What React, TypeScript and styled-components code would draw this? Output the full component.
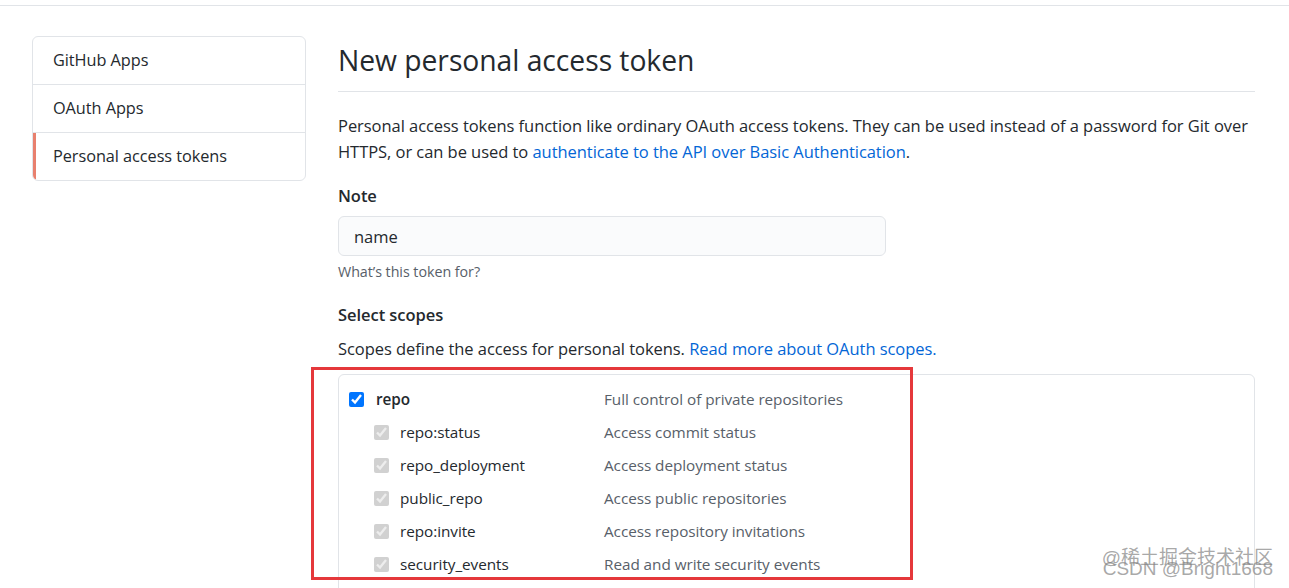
import React from "react";
import styled, { createGlobalStyle } from "styled-components";

const GlobalStyle = createGlobalStyle`
  html, body {
    margin: 0;
    padding: 0;
    background: #fff;
  }
  body {
    font-family: "Open Sans", "Noto Sans", "Liberation Sans", sans-serif;
    color: #24292e;
    font-size: 16.5px;
    letter-spacing: -0.05px;
    line-height: 1.5;
  }
`;

const Page = styled.div`
  position: relative;
  width: 1289px;
  height: 588px;
  overflow: hidden;
`;

const TopBar = styled.div`
  height: 5px;
  border-bottom: 1px solid #e1e4e8;
`;

const Layout = styled.div`
  display: flex;
  align-items: flex-start;
  gap: 32px;
  padding: 30px 0 0 32px;
`;

const SideMenu = styled.nav`
  width: 274px;
  flex-shrink: 0;
  border: 1px solid #e1e4e8;
  border-radius: 6px;
  overflow: hidden;
  box-sizing: border-box;
`;

const MenuItem = styled.a<{ $active?: boolean }>`
  display: block;
  height: 47px;
  line-height: 47px;
  padding-left: 20px;
  font-size: 16.3px;
  color: #24292e;
  text-decoration: none;
  border-top: 1px solid #e1e4e8;
  box-shadow: ${({ $active }) => ($active ? "inset 3px 0 0 #e8806e" : "none")};
  &:first-child {
    border-top: none;
  }
`;

const Main = styled.main`
  width: 917px;
  flex-shrink: 0;
`;

const Subhead = styled.div`
  margin-top: 5px;
  padding-bottom: 12px;
  border-bottom: 1px solid #e1e4e8;
`;

const Heading = styled.h2`
  margin: 0;
  font-size: 28.3px;
  font-weight: 400;
  line-height: 38px;
`;

const Lead = styled.p`
  margin: 21px 0 0;
  line-height: 26px;
`;

const Link = styled.a`
  color: #0366d6;
  text-decoration: none;
`;

const Label = styled.div<{ $gap: number }>`
  margin-top: ${({ $gap }) => $gap}px;
  font-weight: 600;
  line-height: 26px;
`;

const TextInput = styled.input`
  display: block;
  margin-top: 7px;
  width: 548px;
  height: 40px;
  box-sizing: border-box;
  padding: 0 15px;
  font-family: inherit;
  font-size: 16.5px;
  color: #24292e;
  background: #fafbfc;
  border: 1px solid #e1e4e8;
  border-radius: 6px;
  outline: none;
`;

const Hint = styled.div`
  margin-top: 6px;
  font-size: 14.3px;
  line-height: 20px;
  color: #586069;
`;

const Description = styled.p`
  margin: 8px 0 0;
  line-height: 26px;
`;

const ScopeBox = styled.div`
  margin-top: 12px;
  height: 260px;
  padding: 8px 10px;
  border: 1px solid #e1e4e8;
  border-radius: 6px;
  box-sizing: border-box;
`;

const ScopeRow = styled.label<{ $child?: boolean }>`
  display: grid;
  grid-template-columns: ${({ $child }) => ($child ? "25px 15px 11px 204px" : "0 15px 12px 228px")} 1fr;
  align-items: center;
  height: 33px;
`;

const Check = styled.input`
  grid-column: 2;
  width: 15px;
  height: 15px;
  margin: 0;
`;

const ScopeName = styled.span<{ $bold?: boolean }>`
  grid-column: 4;
  font-weight: ${({ $bold }) => ($bold ? 600 : 400)};
  font-size: 15.3px;
  color: #24292e;
`;

const ScopeDesc = styled.span`
  grid-column: 5;
  font-size: 15.3px;
  color: #586069;
`;

const Highlight = styled.div`
  position: absolute;
  left: 311px;
  top: 367px;
  width: 602px;
  height: 213px;
  box-sizing: border-box;
  border: 3px solid #e5383b;
  pointer-events: none;
`;

const Watermark = styled.div`
  position: absolute;
  right: 16px;
  bottom: 14px;
  display: flex;
  flex-direction: column;
  align-items: flex-end;
  font-family: "Liberation Sans", "Noto Sans CJK SC", sans-serif;
  font-size: 19px;
  line-height: 11px;
  letter-spacing: 0;
  color: rgba(130, 130, 130, 0.7);
  pointer-events: none;
`;

const scopes = [
  { name: "repo:status", desc: "Access commit status" },
  { name: "repo_deployment", desc: "Access deployment status" },
  { name: "public_repo", desc: "Access public repositories" },
  { name: "repo:invite", desc: "Access repository invitations" },
  { name: "security_events", desc: "Read and write security events" },
];

export default function App() {
  return (
    <Page>
      <GlobalStyle />
      <TopBar />
      <Layout>
        <SideMenu>
          <MenuItem href="#">GitHub Apps</MenuItem>
          <MenuItem href="#">OAuth Apps</MenuItem>
          <MenuItem href="#" $active>
            Personal access tokens
          </MenuItem>
        </SideMenu>
        <Main>
          <Subhead>
            <Heading>New personal access token</Heading>
          </Subhead>
          <Lead>
            Personal access tokens function like ordinary OAuth access tokens. They can be used
            instead of a password for Git over HTTPS, or can be used to{" "}
            <Link href="#">authenticate to the API over Basic Authentication</Link>.
          </Lead>
          <Label $gap={18}>Note</Label>
          <TextInput defaultValue="name" />
          <Hint>What’s this token for?</Hint>
          <Label $gap={20}>Select scopes</Label>
          <Description>
            Scopes define the access for personal tokens.{" "}
            <Link href="#">Read more about OAuth scopes.</Link>
          </Description>
          <ScopeBox>
            <ScopeRow>
              <Check type="checkbox" defaultChecked />
              <ScopeName $bold>repo</ScopeName>
              <ScopeDesc>Full control of private repositories</ScopeDesc>
            </ScopeRow>
            {scopes.map((s) => (
              <ScopeRow $child key={s.name}>
                <Check type="checkbox" defaultChecked disabled />
                <ScopeName>{s.name}</ScopeName>
                <ScopeDesc>{s.desc}</ScopeDesc>
              </ScopeRow>
            ))}
          </ScopeBox>
        </Main>
      </Layout>
      <Highlight />
      <Watermark>
        <span>@稀土掘金技术社区</span>
        <span>CSDN @Bright1668</span>
      </Watermark>
    </Page>
  );
}
